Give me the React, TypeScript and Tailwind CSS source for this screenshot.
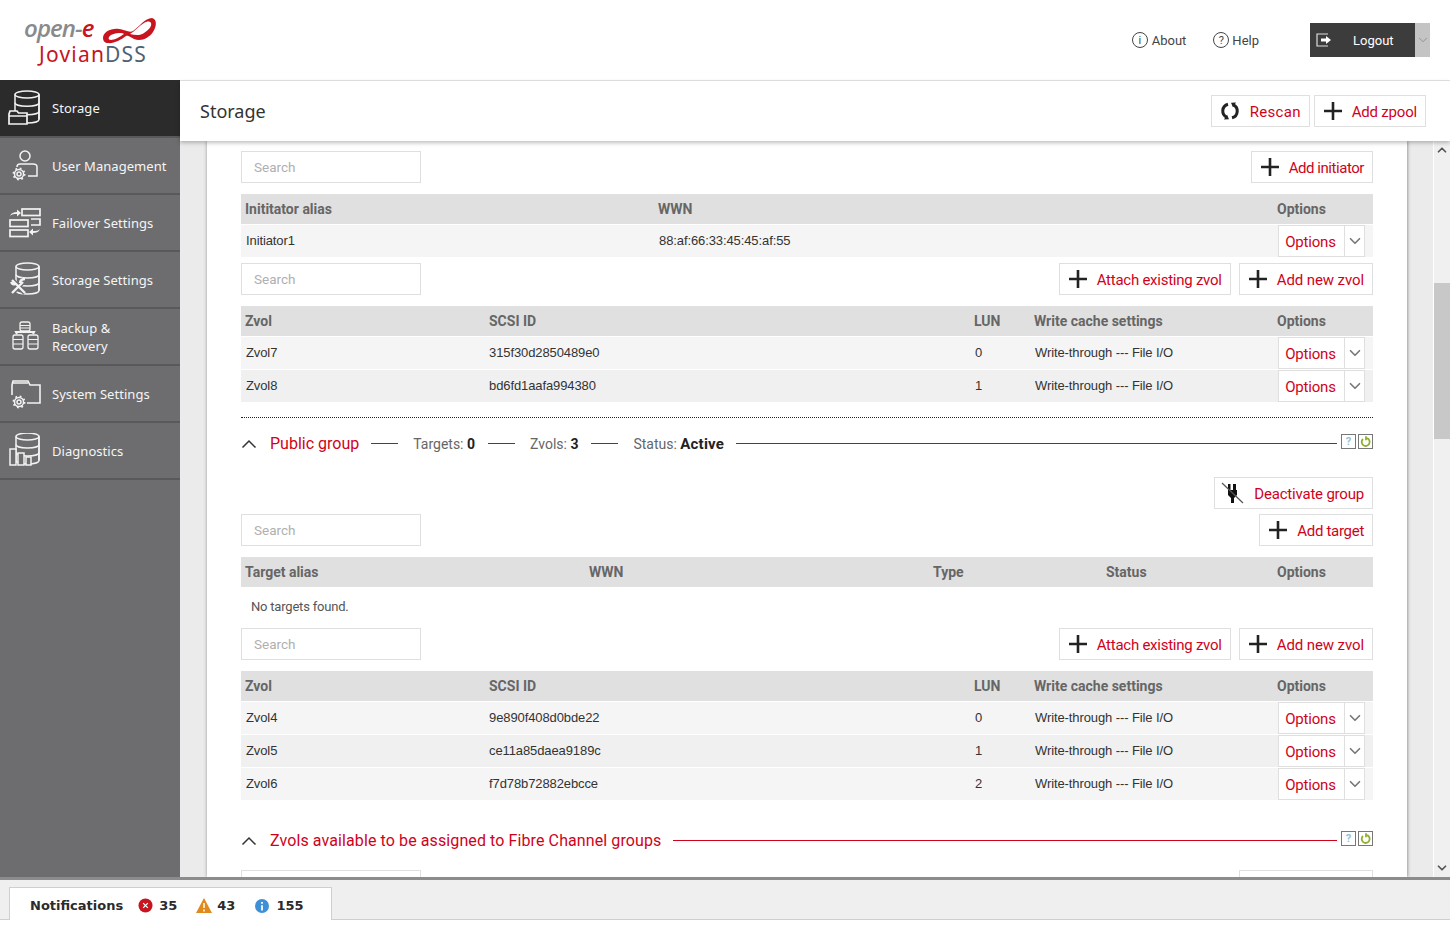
import { ChevronDown, ChevronUp } from "lucide-react";
import type { ReactNode } from "react";

const roboto = "font-['Roboto','Liberation_Sans',sans-serif]";

function Cylinder({ x, w, top, bottom }: { x: number; w: number; top: number; bottom: number }) {
  const h = w / 2;
  const r = x + w;
  const step = (bottom - top - 7) / 3;
  const bands = [1, 2].map((i) => top + 3.5 + step * i);
  return (
    <>
      <ellipse cx={x + h} cy={top + 3.5} rx={h} ry="3.5" />
      <path d={`M${x} ${top + 3.5}V${bottom - 3.5}c0 2 5 3.5 ${h} 3.5s${h}-1.500 ${h}-3.500V${top + 3.5}`} />
      {bands.map((b) => (
        <path key={b} d={`M${x} ${b}c0 2 5 3.500 ${h} 3.500s${h}-1.500 ${h}-3.500`} />
      ))}
      <path d={`M${r} ${top + 3.5}v${bottom - top - 7}`} />
    </>
  );
}

function Gear({ cx, cy, fill }: { cx: number; cy: number; fill: string }) {
  return (
    <g>
      <circle cx={cx} cy={cy} r="6.300" fill={fill} stroke="none" />
      <circle cx={cx} cy={cy} r="2" />
      <circle cx={cx} cy={cy} r="4.500" />
      <circle cx={cx} cy={cy} r="5.600" strokeDasharray="1.800 2.600" strokeWidth="1.800" />
    </g>
  );
}

const navIcons: Record<string, ReactNode> = {
  storage: (
    <>
      <Cylinder x={7} w={24} top={1} bottom={33} />
      <path d="M1 24l1-3h7l1.500 2H19v11H1z" fill="#2b2b2b" strokeWidth="1.700" />
      <path d="M1 26h18" />
    </>
  ),
  user: (
    <>
      <circle cx="17" cy="8" r="5" />
      <path d="M20 28h9v-9c0-2-2-3-4-3H12c-2 0-3 1-3 3" />
      <Gear cx={11} cy={26} fill="#6d6d6f" />
    </>
  ),
  failover: (
    <>
      <rect x="14" y="4" width="18" height="6.500" strokeWidth="1.700" />
      <rect x="2" y="15" width="18" height="6.500" strokeWidth="1.700" />
      <rect x="2" y="25" width="18" height="6.500" strokeWidth="1.700" />
      <path d="M23 14h9v6h-9" strokeWidth="1.700" />
      <path d="M2 11c1-3 4-4 7-4V4.500l4 3.500-4 3.500V9c-3 0-5 0-7 2zM32 24c-1 3-4 4-7 4v2.500L21 27l4-3.500V26c3 0 5 0 7-2z" fill="#f2f2f2" stroke="none" />
    </>
  ),
  settings: (
    <>
      <Cylinder x={8} w={23} top={1} bottom={32} />
      <path d="M3 17l14 14M4 31l12-12M16 17l-3 4M3 21l4-1" stroke="#6d6d6f" strokeWidth="5" />
      <path d="M4 18l13 13M4 31l11-11M12 21c0-3 2-4 5-4M3 20c1 2 2 3 4 2" strokeWidth="2.400" />
    </>
  ),
  backup: (
    <>
      <rect x="12" y="3" width="10" height="9" rx="2" strokeWidth="1.300" />
      <path d="M12 6.500h10M12 9h10" strokeWidth="1" />
      <path d="M9 15l-1-2h18l-1 2M17 12v2" strokeWidth="2" />
      <rect x="5" y="16" width="10" height="14" rx="2" strokeWidth="1.300" />
      <rect x="20" y="16" width="10" height="14" rx="2" strokeWidth="1.300" />
      <path d="M5 20.500h10M5 25h10M20 20.500h10M20 25h10" strokeWidth="1" />
    </>
  ),
  system: (
    <>
      <path d="M4 19V9l1-4h15l2 4h10v18H19" strokeWidth="1.600" />
      <path d="M5 7h15" />
      <Gear cx={11} cy={26} fill="#6d6d6f" />
    </>
  ),
  diag: (
    <>
      <Cylinder x={8} w={23} top={0} bottom={31} />
      <rect x="2" y="16" width="6" height="16" fill="#6d6d6f" />
      <rect x="10" y="20" width="6" height="12" fill="#6d6d6f" />
      <rect x="18" y="24" width="5" height="8" fill="#6d6d6f" />
    </>
  ),
};

const navItems = [
  { key: "storage", label: "Storage", active: true },
  { key: "user", label: "User Management" },
  { key: "failover", label: "Failover Settings" },
  { key: "settings", label: "Storage Settings" },
  { key: "backup", label: "Backup & Recovery" },
  { key: "system", label: "System Settings" },
  { key: "diag", label: "Diagnostics" },
];

function Sidebar() {
  return (
    <div className="w-[180px] shrink-0 bg-[#6d6d6f]">
      {navItems.map((item) => (
        <div
          key={item.key}
          className={`flex h-[57px] items-center border-b-2 border-[#59595b] pl-[8px] first:h-[58px] ${item.active ? "bg-[#2b2b2b]" : ""}`}
        >
          <svg viewBox="0 0 36 36" className="h-[36px] w-[36px] shrink-0" fill="none" stroke="#f2f2f2" strokeWidth="1.500">
            {navIcons[item.key]}
          </svg>
          <span className={`ml-[8px] font-['Noto_Sans',sans-serif] text-[13px] leading-[18px] tracking-[0.05px] text-[#f5f5f5] ${item.key === "backup" ? "w-[70px]" : "whitespace-nowrap"}`}>
            {item.label}
          </span>
        </div>
      ))}
    </div>
  );
}

function PlusIcon() {
  return (
    <svg viewBox="0 0 20 20" className="h-[20px] w-[20px] shrink-0" fill="none" stroke="#222" strokeWidth="2.600">
      <path d="M10 1v18M1 10h18" />
    </svg>
  );
}

function RescanIcon() {
  return (
    <svg viewBox="0 0 20 20" className="h-[20px] w-[20px] shrink-0" fill="none" stroke="#222" strokeWidth="3">
      <path d="M8 3.200A7 7 0 0 0 7 16.400M12 16.800A7 7 0 0 0 13 3.600" />
      <path d="M4 18.500l5-.2-2-4.600zM16 1.500l-5 .2 2 4.600z" fill="#222" stroke="none" />
    </svg>
  );
}

function PlugIcon() {
  return (
    <svg viewBox="0 0 24 24" className="h-[24px] w-[24px] shrink-0">
      <path d="M7 3h2.500v6h2.500V3H15v6h1v5l-3 3v5h-3v-5l-3-3V9z" fill="#111" />
      <path d="M1 2l21 20" stroke="#555" strokeWidth="1.200" />
    </svg>
  );
}

function ActionButton({
  icon,
  label,
  pad = "pl-[8px]",
  labelClass = "ml-[9px] tracking-[-0.2px]",
}: {
  icon: ReactNode;
  label: string;
  pad?: string;
  labelClass?: string;
}) {
  return (
    <button className={`flex h-[32px] items-center border border-[#dfdfdf] bg-white pr-[8px] ${pad}`}>
      {icon}
      <span className={`pt-[2px] text-[15px] leading-none text-[#d0021b] ${labelClass}`}>{label}</span>
    </button>
  );
}

function SearchBox() {
  return (
    <div className="flex h-[32px] w-[180px] items-center border border-[#dfdfdf] bg-white pl-[12px] text-[13.5px] text-[#b0b0b0]">Search</div>
  );
}

function Toolbar({ buttons }: { buttons: ReactNode }) {
  return (
    <div className="flex items-center justify-between">
      <SearchBox />
      <div className="flex gap-[8px]">{buttons}</div>
    </div>
  );
}

function ZvolButtons() {
  return (
    <>
      <ActionButton icon={<PlusIcon />} label="Attach existing zvol" labelClass="ml-[9px] tracking-[-0.25px]" />
      <ActionButton icon={<PlusIcon />} label="Add new zvol" labelClass="ml-[9px] tracking-[-0.1px]" />
    </>
  );
}

function OptionsButton() {
  return (
    <div className="flex h-[32px] w-[87px] border border-[#dfdfdf] bg-white tracking-[-0.2px]">
      <span className="flex w-[66px] items-center justify-center border-r border-[#dfdfdf] pr-[2px] pt-[2px] font-['Roboto',sans-serif] text-[15px] text-[#d0021b]">Options</span>
      <span className="flex flex-1 items-center justify-center text-[#777]">
        <ChevronDown size={18} strokeWidth={2.2} />
      </span>
    </div>
  );
}

function Table({ cols, head, rows }: { cols: string; head: string[]; rows: string[][] }) {
  return (
    <div>
      <div className={`grid h-[30px] items-center bg-[#e0e0e0] text-[14px] font-bold text-[#666] ${cols}`}>
        {head.map((h) => (
          <div key={h} className="pl-[4px]">{h}</div>
        ))}
      </div>
      {rows.map((row, i) => (
        <div
          key={row[0]}
          className={`grid h-[33px] items-center border-t border-white font-['Liberation_Sans',sans-serif] text-[13px] tracking-[-0.1px] text-[#333] ${cols} ${i % 2 === 0 ? "bg-[#f5f5f5]" : "bg-[#f0f0f0]"}`}
        >
          {row.map((c, j) => (
            <div key={j} className={j === 1 && row.length === 4 ? "pl-[4px]" : "pl-[5px]"}>{c}</div>
          ))}
          <div className="pl-[5px]">
            <OptionsButton />
          </div>
        </div>
      ))}
    </div>
  );
}

function CollapseIcon() {
  return (
    <svg viewBox="0 0 16 10" className="h-[10px] w-[16px] shrink-0" fill="none" stroke="#333" strokeWidth="1.500">
      <path d="M1.500 8.500L8 2l6.500 6.500" />
    </svg>
  );
}

function SmallIcons() {
  return (
    <div className="mb-[5px] flex shrink-0 gap-[2px]">
      <span className="flex h-[15px] w-[15px] items-center justify-center border border-[#777] bg-white text-[11px] font-bold leading-none text-[#8fc1d9]">?</span>
      <span className="flex h-[15px] w-[15px] items-center justify-center border border-[#777] bg-white">
        <svg viewBox="0 0 12 12" className="h-[12px] w-[12px]" fill="none" stroke="#8fae2e" strokeWidth="1.800">
          <path d="M7 2.200A4 4 0 1 1 3 3M6 .2v4" />
        </svg>
      </span>
    </div>
  );
}

const zvolCols = "grid-cols-[244px_485px_60px_243px_100px]";
const zvolHead = ["Zvol", "SCSI ID", "LUN", "Write cache settings", "Options"];
const wt = "Write-through --- File I/O";

export default function App() {
  return (
    <div className={`flex h-[925px] w-[1450px] flex-col overflow-hidden bg-white ${roboto}`}>
      {/* top bar */}
      <div className="flex h-[80px] shrink-0 items-center pr-[20px]">
        <div className="mb-[3px] ml-[24px] w-[140px]">
          <div className="flex h-[30px] items-center">
            <span className="font-['Open_Sans',sans-serif] text-[24px] font-semibold italic leading-none tracking-[-0.9px] text-[#8a8a8a]">open-<span className="text-[#c8141e]">e</span></span>
            <svg viewBox="0 0 54 26" className="ml-[9px] mt-[6px] h-[26px] w-[54px]" fill="#c8141e" fillRule="evenodd">
              <path d="M0 20C0 14 8 10 16 11c7 1 10 4 14 2C36 9 42 0 49 0c5 1 5 8 1 14-4 6-12 10-19 7-4-2-6-4-8-3-5 4-13 8-18 7-3 0-5-2-5-5zM6 19c2-3 7-4 11-4 2 0 3 0 4 1-4 3-10 6-13 6-2 0-3-1-2-3zM27 16c5 1 10 2 14-1 5-3 8-7 7-10-1-2-4-2-7 0-5 3-9 8-14 11z" />
            </svg>
          </div>
          <div className="ml-[15px] mt-[1px] font-['Noto_Sans',sans-serif] text-[21px] leading-[20px] tracking-[1.2px]">
            <span className="text-[#c8141e]">Jovian</span>
            <span className="text-[#4d6272]">DSS</span>
          </div>
        </div>
        <div className="ml-auto flex items-center">
          <span className="flex h-[16px] w-[16px] items-center justify-center rounded-full border border-[#444] text-[11px] leading-none text-[#444]">i</span>
          <span className="ml-[4px] mt-[2px] text-[13px] text-[#444]">About</span>
          <span className="ml-[27px] flex h-[16px] w-[16px] items-center justify-center rounded-full border border-[#444] text-[11px] leading-none text-[#444]">?</span>
          <span className="ml-[3px] mt-[2px] text-[13px] text-[#444]">Help</span>
          <div className="ml-[51px] flex h-[34px]">
            <div className="flex w-[105px] items-center bg-[#3c3c3c] pl-[6px]">
              <svg viewBox="0 0 16 14" className="h-[14px] w-[16px]" fill="none" stroke="#ddd" strokeWidth="1.200">
                <path d="M12 1H1v12h11" />
                <path d="M5 5.500h5V3l5 4-5 4V8.500H5z" fill="#fff" stroke="none" />
              </svg>
              <span className="ml-[21px] text-[13px] leading-none text-white">Logout</span>
            </div>
            <div className="flex w-[15px] items-center justify-center bg-[#c4c4c4] text-[#888]">
              <ChevronDown size={14} strokeWidth={1.400} />
            </div>
          </div>
        </div>
      </div>

      <div className="flex min-h-0 flex-1">
        <Sidebar />
        <div className="flex min-w-0 flex-1 flex-col border-t border-[#e3e3e3] bg-[#ebebeb]">
          {/* page title */}
          <div className="z-10 flex h-[60px] shrink-0 items-center justify-between bg-white pl-[20px] pr-[24px] shadow-[0_2px_4px_rgba(0,0,0,0.25)]">
            <span className="font-['Noto_Sans',sans-serif] text-[18px] text-[#333]">Storage</span>
            <div className="flex gap-[4px]">
              <ActionButton icon={<RescanIcon />} label="Rescan" labelClass="ml-[10px] tracking-[0.3px]" />
              <ActionButton icon={<PlusIcon />} label="Add zpool" />
            </div>
          </div>

          <div className="flex min-h-0 flex-1">
            {/* scrolling panel */}
            <div className="ml-[27px] w-[1200px] shrink-0 overflow-hidden bg-white pl-[34px] pr-[34px] pt-[10px] shadow-[1px_0_3px_rgba(0,0,0,0.3),-1px_0_3px_rgba(0,0,0,0.15)]">
              <Toolbar buttons={<ActionButton icon={<PlusIcon />} label="Add initiator" labelClass="ml-[9px] tracking-[-0.45px]" />} />
              <div className="mt-[11px]">
                <Table
                  cols="grid-cols-[413px_619px_100px]"
                  head={["Inititator alias", "WWN", "Options"]}
                  rows={[["Initiator1", "88:af:66:33:45:45:af:55"]]}
                />
              </div>
              <div className="mt-[6px]">
                <Toolbar buttons={<ZvolButtons />} />
              </div>
              <div className="mt-[11px]">
                <Table
                  cols={zvolCols}
                  head={zvolHead}
                  rows={[
                    ["Zvol7", "315f30d2850489e0", "0", wt],
                    ["Zvol8", "bd6fd1aafa994380", "1", wt],
                  ]}
                />
              </div>
              <div className="mt-[15px] border-t border-dotted border-[#222]" />

              {/* public group */}
              <div className="mt-[17px] flex h-[18px] items-center text-[14px] text-[#666]">
                <CollapseIcon />
                <span className="ml-[13px] text-[16px] text-[#d0021b]">Public group</span>
                <span className="mb-[1px] ml-[12px] h-px w-[27px] bg-[#b5121b]" />
                <span className="ml-[15px]">Targets: <b className="text-[#222]">0</b></span>
                <span className="mb-[1px] ml-[13px] h-px w-[27px] bg-[#b5121b]" />
                <span className="ml-[15px]">Zvols: <b className="text-[#222]">3</b></span>
                <span className="mb-[1px] ml-[13px] h-px w-[27px] bg-[#b5121b]" />
                <span className="ml-[15px]">Status: <b className="text-[15px] tracking-[0.2px] text-[#222]">Active</b></span>
                <span className="mb-[1px] ml-[12px] mr-[4px] h-px flex-1 bg-[#b5121b]" />
                <SmallIcons />
              </div>
              <div className="mt-[24px] flex justify-end">
                <ActionButton icon={<PlugIcon />} label="Deactivate group" pad="pl-[6px]" />
              </div>
              <div className="mt-[5px]">
                <Toolbar buttons={<ActionButton icon={<PlusIcon />} label="Add target" labelClass="ml-[9px] tracking-[-0.3px]" />} />
              </div>
              <div className="mt-[11px] grid h-[30px] grid-cols-[344px_344px_173px_171px_100px] items-center bg-[#e0e0e0] text-[14px] font-bold text-[#666]">
                {["Target alias", "WWN", "Type", "Status", "Options"].map((h) => (
                  <div key={h} className="pl-[4px]">{h}</div>
                ))}
              </div>
              <div className="flex h-[41px] items-center pb-[2px] pl-[10px] text-[13px] tracking-[-0.2px] text-[#555]">No targets found.</div>
              <Toolbar buttons={<ZvolButtons />} />
              <div className="mt-[11px]">
                <Table
                  cols={zvolCols}
                  head={zvolHead}
                  rows={[
                    ["Zvol4", "9e890f408d0bde22", "0", wt],
                    ["Zvol5", "ce11a85daea9189c", "1", wt],
                    ["Zvol6", "f7d78b72882ebcce", "2", wt],
                  ]}
                />
              </div>

              {/* fibre channel */}
              <div className="mt-[32px] flex h-[18px] items-center">
                <CollapseIcon />
                <span className="ml-[13px] text-[16px] tracking-[0.1px] text-[#d0021b]">Zvols available to be assigned to Fibre Channel groups</span>
                <span className="mb-[1px] ml-[12px] mr-[4px] h-px flex-1 bg-[#d0021b]" />
                <SmallIcons />
              </div>
              {/* next row is cut by the footer, only the box tops show */}
              <div className="mt-[20px] flex justify-between">
                <div className="h-[32px] w-[180px] border border-[#dfdfdf]" />
                <div className="h-[32px] w-[134px] border border-[#dfdfdf]" />
              </div>
            </div>

            {/* scrollbar */}
            <div className="ml-[26px] flex w-[17px] shrink-0 flex-col border-l border-white bg-[#f0f0f0] text-[#555]">
              <ChevronUp size={14} strokeWidth={3} className="ml-[1px] mt-[2px]" />
              <div className="mt-[126px] h-[156px] w-full bg-[#c8c8c8]" />
              <div className="flex-1" />
              <ChevronDown size={14} strokeWidth={3} className="mb-[2px] ml-[1px]" />
            </div>
          </div>
        </div>
      </div>

      {/* notifications */}
      <div className="h-[48px] shrink-0 bg-white">
        <div className="flex h-[43px] items-end border-b border-t-[3px] border-b-[#cfcfcf] border-t-[#8c8c8c] bg-[#efefef] pl-[9px]">
          <div className="mb-[-1px] flex h-[33px] w-[323px] items-center border-x border-t border-[#cfcfcf] bg-white pl-[20px] pt-[3px] font-['DejaVu_Sans',sans-serif] text-[13px] font-bold text-[#2b2b2b]">
            <span>Notifications</span>
            <svg viewBox="0 0 16 16" className="ml-[15px] h-[15px] w-[15px]">
              <circle cx="8" cy="8" r="7.500" fill="#c8141e" />
              <path d="M5.500 5.500l5 5M10.500 5.500l-5 5" stroke="#fff" strokeWidth="1.300" />
            </svg>
            <span className="ml-[6px]">35</span>
            <svg viewBox="0 0 16 15" className="ml-[19px] h-[15px] w-[16px]">
              <path d="M8 0l8 15H0z" fill="#e08a1e" />
              <path d="M8 5v5M8 11.500v2" stroke="#fff" strokeWidth="1.500" />
            </svg>
            <span className="ml-[5px]">43</span>
            <svg viewBox="0 0 16 16" className="ml-[20px] h-[14px] w-[14px]">
              <circle cx="8" cy="8" r="8" fill="#3f8fd6" />
              <path d="M8 3.500v2M8 7v6" stroke="#fff" strokeWidth="2" />
            </svg>
            <span className="ml-[7px]">155</span>
          </div>
        </div>
      </div>
    </div>
  );
}
